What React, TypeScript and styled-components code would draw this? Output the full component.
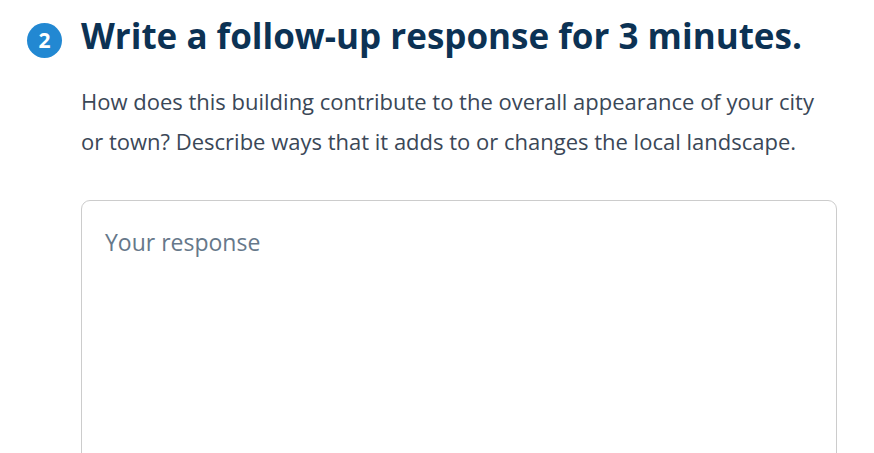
import React from "react";
import styled, { createGlobalStyle } from "styled-components";

const Global = createGlobalStyle`
  html, body { margin: 0; padding: 0; background: #ffffff; }
  body { font-family: "Open Sans", "Liberation Sans", sans-serif; overflow: hidden; }
`;

const Page = styled.div`
  padding: 14px 0 0 27px;
  width: 874px;
  box-sizing: border-box;
`;

const Header = styled.div`
  display: flex;
  align-items: flex-start;
  gap: 19px;
`;

const StepBadge = styled.div`
  flex: none;
  width: 35px;
  height: 35px;
  margin-top: 9px;
  border-radius: 50%;
  background: #2288d2;
  color: #ffffff;
  display: flex;
  align-items: center;
  justify-content: center;
  font-size: 21px;
  line-height: 1;
  font-weight: 700;
`;

const Title = styled.h2`
  margin: 0;
  font-size: 35px;
  line-height: 44px;
  font-weight: 700;
  color: #0c3254;
`;

const Body = styled.div`
  padding-left: 54px;
`;

const Prompt = styled.p`
  margin: 23px 0 0;
  font-size: 22px;
  line-height: 40px;
  color: #3a4757;
`;

const Response = styled.textarea`
  display: block;
  margin-top: 39px;
  width: 756px;
  height: 300px;
  box-sizing: border-box;
  border: 1px solid #cccccc;
  border-radius: 9px;
  padding: 25px 23px;
  font-family: "Open Sans", "Liberation Sans", sans-serif;
  font-size: 23px;
  line-height: 32px;
  color: #2a3a4a;
  resize: none;
  outline: none;
  &::placeholder { color: #66788a; }
`;

export default function App() {
  return (
    <>
      <Global />
      <Page>
        <Header>
          <StepBadge>2</StepBadge>
          <Title>Write a follow-up response for 3 minutes.</Title>
        </Header>
        <Body>
          <Prompt>
            How does this building contribute to the overall appearance of your city
            <br />
            or town? Describe ways that it adds to or changes the local landscape.
          </Prompt>
          <Response placeholder="Your response" />
        </Body>
      </Page>
    </>
  );
}
